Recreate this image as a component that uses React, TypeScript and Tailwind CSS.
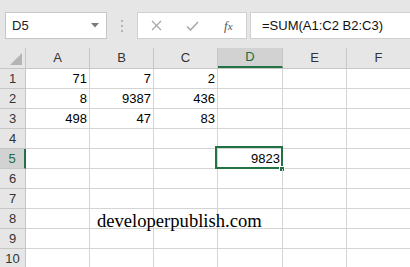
import React from 'react';

const COLS = ['A', 'B', 'C', 'D', 'E', 'F'];
const WIDTHS = ['w-[64px]', 'w-[64px]', 'w-[64px]', 'w-[65px]', 'w-[64px]', 'w-[64px]'];

// cell values by row number, column index
const DATA: Record<number, (string | null)[]> = {
    1: ['71', '7', '2', null, null, null],
    2: ['8', '9387', '436', null, null, null],
    3: ['498', '47', '83', null, null, null],
    5: [null, null, null, '9823', null, null],
};

const font = { fontFamily: '"Liberation Sans", Arial, sans-serif' };

const Cell = ({ row, col }: { row: number; col: number }) => {
    const value = DATA[row]?.[col] ?? null;
    const selected = row === 5 && col === 3;
    const watermark = row === 8 && col === 1;

    return (
        <div className={`relative ${WIDTHS[col]} shrink-0 h-full border-r border-[#d4d4d4] flex items-center justify-end pr-[2px] text-[13px] text-black`}>
            {value}
            {watermark && (
                <span
                    className="absolute left-[7px] top-[-2px] whitespace-nowrap text-[18.6px] text-black z-10"
                    style={{ fontFamily: '"Liberation Serif", "Times New Roman", serif' }}
                >
                    developerpublish.com
                </span>
            )}
            {selected && (
                <>
                    <div className="absolute -left-[3px] -top-[3px] -right-[1px] -bottom-[1px] border-2 border-[#217346] pointer-events-none" />
                    <div className="absolute -right-[3px] -bottom-[4px] w-[6px] h-[6px] bg-[#217346] border border-white" />
                </>
            )}
        </div>
    );
};

const App = () => {
    return (
        <div className="w-[410px] h-[267px] overflow-hidden bg-white select-none" style={font}>
            {/* formula bar */}
            <div className="h-[48px] bg-[#e6e6e6] flex items-start pt-[12px] pl-[5px] gap-0">
                <div className="w-[102px] h-[27px] bg-white border border-[#c6c6c6] flex items-center justify-between pl-[6px] pr-[7px] text-[13px] text-[#222]">
                    <span>D5</span>
                    <svg width="8" height="5" viewBox="0 0 8 5"><path d="M0 0h8L4 4.5z" fill="#7a7a7a" /></svg>
                </div>
                <div className="w-[30px] h-[27px] flex flex-col items-center justify-center gap-[3px]">
                    <span className="w-[2px] h-[2px] bg-[#b4b4b4]" />
                    <span className="w-[2px] h-[2px] bg-[#b4b4b4]" />
                    <span className="w-[2px] h-[2px] bg-[#b4b4b4]" />
                </div>
                <div className="w-[110px] h-[27px] bg-white border border-[#d0d0d0] flex items-center">
                    <div className="w-[38px] flex justify-center">
                        <svg width="11" height="11" viewBox="0 0 11 11"><path d="M1 1l9 9M10 1l-9 9" stroke="#a6a6a6" strokeWidth="1.2" /></svg>
                    </div>
                    <div className="w-[36px] flex justify-center">
                        <svg width="13" height="10" viewBox="0 0 13 10"><path d="M1 5.5l3.5 3.5L12 1" stroke="#a6a6a6" strokeWidth="1.5" fill="none" /></svg>
                    </div>
                    <div className="w-[36px] flex justify-center">
                        <span className="italic text-[13px] text-[#555]" style={{ fontFamily: '"Liberation Serif", serif' }}>
                            f<span className="text-[11px]">x</span>
                        </span>
                    </div>
                </div>
                <div className="flex-1 ml-[3px] h-[27px] bg-white border border-r-0 border-[#d0d0d0] flex items-center pl-[11px] text-[13px] text-[#111] whitespace-nowrap">
                    =SUM(A1:C2 B2:C3)
                </div>
            </div>

            {/* column headers */}
            <div className="flex h-[21px] bg-[#e6e6e6] border-b border-[#c6c6c6]">
                <div className="relative w-[26px] shrink-0 h-full border-r border-[#c6c6c6]">
                    <svg className="absolute right-[3px] bottom-[3px]" width="12" height="12" viewBox="0 0 12 12"><path d="M12 0V12H0z" fill="#b4b4b4" /></svg>
                </div>
                {COLS.map((c, i) => (
                    <div
                        key={c}
                        className={`${WIDTHS[i]} shrink-0 h-full flex items-center justify-center text-[13px] border-r border-[#c6c6c6] ${
                            c === 'D' ? 'bg-[#d2d2d2] text-[#1e6b3f] border-b-2 border-b-[#217346] -mb-[1px]' : 'text-[#333]'
                        }`}
                    >
                        {c}
                    </div>
                ))}
            </div>

            {/* rows */}
            {Array.from({ length: 10 }, (_, r) => r + 1).map((row) => (
                <div key={row} className="flex h-[20px] border-b border-[#d4d4d4]">
                    <div
                        className={`w-[26px] shrink-0 h-[20px] -mb-[1px] flex items-center justify-center text-[13px] border-b ${
                            row === 5
                                ? 'bg-[#d2d2d2] text-[#1e6b3f] border-r-2 border-r-[#217346] border-b-[#c6c6c6]'
                                : 'bg-[#e6e6e6] text-[#333] border-r border-r-[#c6c6c6] border-b-[#c6c6c6]'
                        }`}
                    >
                        {row}
                    </div>
                    {COLS.map((_, i) => (
                        <Cell key={i} row={row} col={i} />
                    ))}
                </div>
            ))}
        </div>
    );
};

export default App;
